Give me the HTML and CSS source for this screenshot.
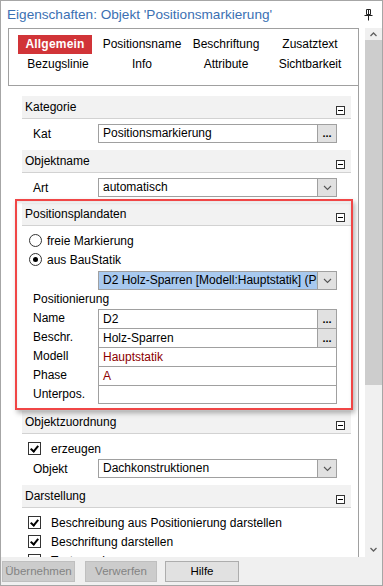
FILE: index.html
```html
<!DOCTYPE html>
<html lang="de">
<head>
<meta charset="utf-8">
<title>Eigenschaften</title>
<link rel="stylesheet" href="styles.css">
</head>
<body>
<div class="win">
  <div class="titlebar">
    <span class="title">Eigenschaften: Objekt 'Positionsmarkierung'</span>
    <svg class="pin" width="9" height="12" viewBox="0 0 9 12"><path d="M2.5 0.5h4v5h-4z M4.5 0.5v5 M0.5 6.5h8 M4.5 6.5v5" fill="none" stroke="#222" stroke-width="1"/></svg>
  </div>
  <div class="main">
    <div class="leftcol">
      <div class="tabs">
        <span class="tab active">Allgemein</span>
        <span class="tab">Positionsname</span>
        <span class="tab">Beschriftung</span>
        <span class="tab">Zusatztext</span>
        <span class="tab">Bezugslinie</span>
        <span class="tab">Info</span>
        <span class="tab">Attribute</span>
        <span class="tab">Sichtbarkeit</span>
      </div>
      <div class="content">
        <div class="section">
          <div class="sechead"><span>Kategorie</span><span class="minus"></span></div>
          <div class="row">
            <span class="lbl">Kat</span>
            <div class="field"><span class="val">Positionsmarkierung</span><span class="dots">...</span></div>
          </div>
        </div>
        <div class="section">
          <div class="sechead"><span>Objektname</span><span class="minus"></span></div>
          <div class="row">
            <span class="lbl">Art</span>
            <div class="field"><span class="val">automatisch</span><span class="drop"><svg width="9" height="6" viewBox="0 0 9 6"><path d="M1 1l3.5 3.5L8 1" fill="none" stroke="#555" stroke-width="1.1"/></svg></span></div>
          </div>
        </div>
        <div class="section marked">
          <div class="sechead"><span>Positionsplandaten</span><span class="minus"></span></div>
          <div class="optrow first"><span class="radio"></span><span>freie Markierung</span></div>
          <div class="optrow"><span class="radio on"></span><span>aus BauStatik</span></div>
          <div class="row sel">
            <span class="lbl"></span>
            <div class="field blue"><span class="val">D2 Holz-Sparren [Modell:Hauptstatik] (Phase: A)</span><span class="drop"><svg width="9" height="6" viewBox="0 0 9 6"><path d="M1 1l3.5 3.5L8 1" fill="none" stroke="#555" stroke-width="1.1"/></svg></span></div>
          </div>
          <div class="sublbl">Positionierung</div>
          <div class="grid">
            <div class="grow"><span class="lbl">Name</span><div class="cell"><span class="val">D2</span><span class="dots">...</span></div></div>
            <div class="grow"><span class="lbl">Beschr.</span><div class="cell"><span class="val">Holz-Sparren</span><span class="dots">...</span></div></div>
            <div class="grow"><span class="lbl">Modell</span><div class="cell"><span class="val red">Hauptstatik</span></div></div>
            <div class="grow"><span class="lbl">Phase</span><div class="cell"><span class="val red">A</span></div></div>
            <div class="grow last"><span class="lbl">Unterpos.</span><div class="cell"><span class="val"></span></div></div>
          </div>
        </div>
        <div class="section s4">
          <div class="sechead"><span>Objektzuordnung</span><span class="minus"></span></div>
          <div class="optrow first"><span class="check"></span><span>erzeugen</span></div>
          <div class="row obj">
            <span class="lbl">Objekt</span>
            <div class="field"><span class="val">Dachkonstruktionen</span><span class="drop"><svg width="9" height="6" viewBox="0 0 9 6"><path d="M1 1l3.5 3.5L8 1" fill="none" stroke="#555" stroke-width="1.1"/></svg></span></div>
          </div>
        </div>
        <div class="section">
          <div class="sechead"><span>Darstellung</span><span class="minus"></span></div>
          <div class="optrow first"><span class="check"></span><span>Beschreibung aus Positionierung darstellen</span></div>
          <div class="optrow"><span class="check"></span><span>Beschriftung darstellen</span></div>
          <div class="optrow"><span class="check off"></span><span>Text anzeigen</span></div>
        </div>
      </div>
    </div>
    <div class="scrollbar">
      <div class="sbtn"><svg width="7" height="5" viewBox="0 0 7 5"><path d="M0.5 4L3.5 1L6.5 4" fill="none" stroke="#606060" stroke-width="1.3"/></svg></div>
      <div class="thumb"></div>
      <div class="track"></div>
      <div class="sbtn"><svg width="7" height="5" viewBox="0 0 7 5"><path d="M0.5 1L3.5 4L6.5 1" fill="none" stroke="#606060" stroke-width="1.3"/></svg></div>
    </div>
  </div>
  <div class="footer">
    <span class="btn dis b1">Übernehmen</span>
    <span class="btn dis b2">Verwerfen</span>
    <span class="btn b3">Hilfe</span>
  </div>
</div>
</body>
</html>
```
FILE: styles.css
```css
html, body { margin: 0; padding: 0; background: #fff; }
body { font-family: "Liberation Sans", Arial, sans-serif; font-size: 12px; color: #000; }
.win { width: 383px; height: 586px; box-sizing: border-box; border: 1px solid #a6a6a6; display: flex; flex-direction: column; background: #fff; overflow: hidden; }
.titlebar { height: 27px; flex: none; display: flex; align-items: center; padding-left: 6px; padding-right: 9px; }
.title { flex: 1; color: #3b70b3; font-size: 13.6px; white-space: nowrap; }
.pin { display: block; }
.main { height: 529px; flex: none; display: flex; }
.leftcol { width: 351px; margin-left: 7px; display: flex; flex-direction: column; }
.tabs { height: 58px; box-sizing: border-box; border: 1px solid #a0a0a0; padding: 6px 6px 0 7px; display: grid; grid-template-columns: repeat(4, 84px); grid-template-rows: 19px 20px; align-items: center; justify-items: center; }
.tab { line-height: 19px; white-space: nowrap; }
.tab.active { background: #d13438; color: #fff; font-weight: bold; width: 74px; text-align: center; letter-spacing: 0.2px; margin-left: -6px; }
.content { flex: 1; border-right: 1px solid #a0a0a0; padding: 10px 7px 0 14px; overflow: hidden; }
.section { margin-top: 7px; }
.section:first-child { margin-top: 0; }
.section.marked { margin-top: 6px; position: relative; }
.section.marked::after { content: ""; position: absolute; top: -4px; left: -7px; right: -2px; bottom: -6px; border: 2px solid #f04646; box-shadow: 2px 3px 5px rgba(0,0,0,0.3), inset 0 2px 3px rgba(0,0,0,0.1); pointer-events: none; z-index: 2; }
.section.s4 { margin-top: 7px; }
.sechead { height: 23px; box-sizing: border-box; background: #f2f2f2; border-bottom: 1px solid #d2d2d2; display: flex; align-items: center; justify-content: space-between; padding-left: 3px; padding-right: 6px; }
.minus { width: 7px; height: 7px; border: 1px solid #333; position: relative; align-self: flex-end; margin-bottom: 3px; background: #fff; }
.minus::after { content: ""; position: absolute; left: 1px; right: 1px; top: 3px; height: 1px; background: #000; }
.row { display: flex; height: 19px; margin-top: 5px; align-items: center; }
.row.sel { margin-top: 2px; }
.row.obj { margin-top: 1px; }
.lbl { width: 76px; flex: none; box-sizing: border-box; padding-left: 11px; }
.field { width: 239px; height: 19px; box-sizing: border-box; border: 1px solid #a0a0a0; display: flex; background: #fff; }
.field.blue { background: #a8c9ef; }
.val { flex: 1; padding-left: 4px; line-height: 17px; white-space: nowrap; overflow: hidden; }
.val.red { color: #8c0000; }
.dots { width: 18px; flex: none; background: #e1e1e1; border-left: 1px solid #a0a0a0; text-align: center; line-height: 17px; font-weight: bold; letter-spacing: 0; font-size: 11px; }
.drop { width: 18px; flex: none; background: #e1e1e1; border-left: 1px solid #a0a0a0; display: flex; align-items: center; justify-content: center; }
.optrow { display: flex; align-items: center; height: 19px; }
.optrow.first { margin-top: 5px; }
.radio { width: 11px; height: 11px; border: 1px solid #333; border-radius: 50%; margin-left: 7px; margin-right: 5px; position: relative; box-sizing: content-box; }
.radio.on::after { content: ""; position: absolute; left: 3px; top: 3px; width: 5px; height: 5px; border-radius: 50%; background: #000; }
.check { width: 11px; height: 11px; border: 1px solid #333; margin-left: 6px; margin-right: 10px; position: relative; box-sizing: content-box; }
.check::after { content: ""; position: absolute; left: 3px; top: 1px; width: 3px; height: 6px; border: solid #000; border-width: 0 2px 2px 0; transform: rotate(40deg); }
.check.off::after { display: none; }
.sublbl { height: 19px; line-height: 19px; padding-left: 11px; }
.grid { display: flex; flex-direction: column; }
.grow { display: flex; height: 19px; }
.cell { width: 239px; box-sizing: border-box; border: 1px solid #a0a0a0; border-bottom: none; display: flex; }
.grow.last .cell { border-bottom: 1px solid #a0a0a0; }
.grow .lbl { line-height: 19px; }
.cell .val { line-height: 18px; }
.cell .dots { line-height: 18px; }
.scrollbar { width: 17px; margin-left: 6px; background: #f0f0f0; display: flex; flex-direction: column; }
.sbtn { height: 12px; display: flex; align-items: center; justify-content: center; flex: none; }
.sbtn:last-child { height: 16px; }
.thumb { height: 345px; background: #cdcdcd; flex: none; }
.track { flex: 1; }
.footer { flex: 1; background: #f0f0f0; display: flex; align-items: flex-start; padding-top: 4px; padding-left: 1px; }
.btn { height: 21px; box-sizing: border-box; border: 1px solid #adadad; background: #e1e1e1; text-align: center; line-height: 19px; font-size: 11.5px; white-space: nowrap; }
.btn.dis { background: #cccccc; border-color: #bfbfbf; color: #838383; }
.b1 { width: 73px; }
.b2 { width: 72px; margin-left: 10px; }
.b3 { width: 74px; margin-left: 8px; }
```
